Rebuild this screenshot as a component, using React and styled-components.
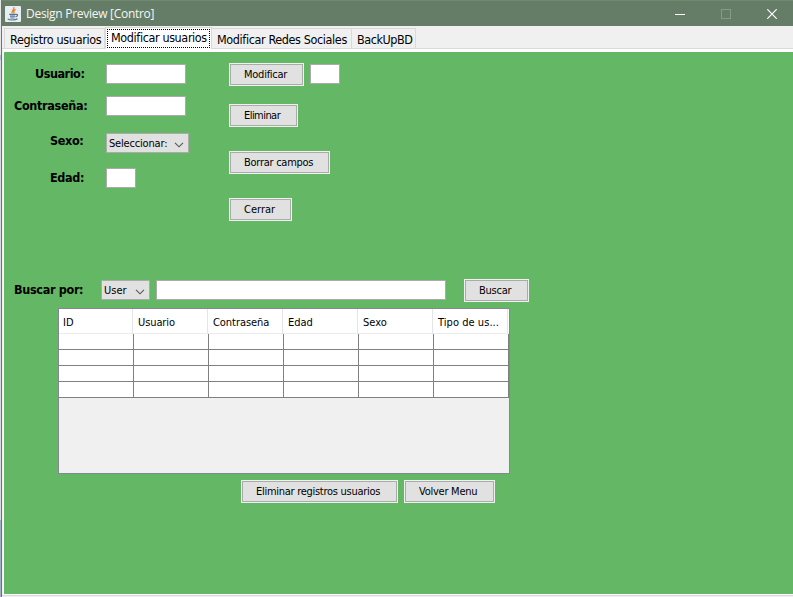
import React from 'react';
import styled, { createGlobalStyle } from 'styled-components';

const Global = createGlobalStyle`
  * { box-sizing: border-box; }
  body { margin: 0; background: #64b865; overflow: hidden; }
`;

const Desktop = styled.div`
  display: flex;
  width: 793px;
  height: 597px;
  background: #f0f0f0;
  color: #000;
  font: 11px/14px "DejaVu Sans Condensed", "DejaVu Sans", sans-serif;
`;

const Edge = styled.div`
  flex: none;
  width: 2px;
  border-right: 1px solid #657d66;
  background: linear-gradient(#e4e6e8 0 55px, #b4bfcc 55px 60px, #d5dbe0 60px 520px, #9fb0c0 520px);
`;

const Window = styled.div`
  display: flex;
  flex-direction: column;
  width: 791px;
`;

const TitleBar = styled.header`
  display: flex;
  align-items: center;
  height: 26px;
  padding-left: 3px;
  border-top: 1px solid #6f8870;
  background: #657d66;
  color: #f4f6f4;
`;

const Title = styled.div`
  flex: 1;
  margin-left: 5px;
  font: 12px/16px "Open Sans", "Noto Sans", sans-serif;
  letter-spacing: ${(p) => p.$track}px;
  white-space: nowrap;
`;

const WindowControls = styled.div`
  display: flex;
  margin-right: -2px;
`;

const WindowControl = styled.div`
  display: flex;
  justify-content: center;
  width: 46px;
  opacity: ${(p) => (p.$dim ? 0.22 : 1)};
  svg { display: block; }
`;

const TabBar = styled.nav`
  display: flex;
  align-items: flex-end;
  height: 23px;
  padding-left: 2px;
  border-bottom: 1px solid #d9d9d9;
`;

const Tab = styled.div`
  flex: none;
  width: ${(p) => p.$w}px;
  height: 20px;
  padding: 3px 0 0 5px;
  border: 1px solid #d9d9d9;
  border-bottom: 0;
  border-left-width: ${(p) => (p.$first ? 1 : 0)}px;
  background: #f0f0f0;
  font-size: 12.5px;
  line-height: 16px;
  letter-spacing: ${(p) => p.$track}px;
  white-space: nowrap;
`;

const ActiveTab = styled(Tab)`
  height: 22px;
  margin-bottom: -1px;
  padding: 1px;
  border-left-width: 1px;
  background: #fff;
`;

const Focus = styled.div`
  height: 19px;
  padding: 0 0 0 3px;
  border: 1px dotted #000;
`;

const Pane = styled.main`
  flex: 1;
  display: flex;
  flex-direction: column;
  margin-left: 1px;
  border: solid #fff;
  border-width: 3px 0 1px 1px;
  background: #64b865;
`;

const Form = styled.section`
  display: flex;
  height: 226px;
  padding-top: 12px;
`;

const Labels = styled.div`
  width: 102px;
  padding-top: 1px;
`;

const Label = styled.div`
  height: 18px;
  margin-top: ${(p) => p.$gap || 0}px;
  margin-left: ${(p) => p.$x}px;
  font-size: 12.5px;
  font-weight: bold;
  line-height: 18px;
  letter-spacing: ${(p) => p.$track || 0}px;
  white-space: nowrap;
`;

const Fields = styled.div`
  width: 123px;
`;

const Input = styled.div`
  width: ${(p) => p.$w}px;
  height: 20px;
  margin-top: ${(p) => p.$gap || 0}px;
  border: 1px solid #ababab;
  background: #fff;
`;

const Select = styled.div`
  display: flex;
  align-items: center;
  justify-content: space-between;
  width: ${(p) => p.$w}px;
  height: 20px;
  margin-top: ${(p) => p.$gap || 0}px;
  padding: 1px 4px 0 2px;
  border: 1px solid #ababab;
  background: #e1e1e1;
  letter-spacing: ${(p) => p.$track || 0}px;
  white-space: nowrap;
  svg { margin-top: 2px; }
`;

const Actions = styled.div`
  display: flex;
  flex-direction: column;
  align-items: flex-start;
  margin-top: -1px;
`;

const Row = styled.div`
  display: flex;
  align-items: flex-start;
  gap: 6px;
`;

const Button = styled.div`
  width: ${(p) => p.$w}px;
  height: 23px;
  margin-top: ${(p) => p.$gap || 0}px;
  padding-left: 14px;
  border: 1px solid #f0f0f0;
  outline: 1px solid #ababab;
  outline-offset: -2px;
  background: #e1e1e1;
  line-height: 21px;
  letter-spacing: ${(p) => p.$track || 0}px;
  white-space: nowrap;
`;

const Search = styled.section`
  display: flex;
  align-items: flex-start;
  height: 30px;
`;

const SearchLabel = styled(Label)`
  width: 87px;
  margin-left: 10px;
  margin-top: 3px;
`;

const SearchInput = styled(Input)`
  margin: 2px 18px 0 6px;
`;

const TableFrame = styled.section`
  width: 452px;
  height: 166px;
  margin-left: 54px;
  border: 1px solid #828790;
  background: #f0f0f0;
`;

const HeaderRow = styled.div`
  display: grid;
  grid-template-columns: repeat(6, 75px);
  height: 25px;
  border-bottom: 1px solid #ececec;
  background: #fff;
`;

const HeaderCell = styled.div`
  margin-right: 1px;
  padding: 7px 0 0 4px;
  border-right: 1px solid #e5e5e5;
  letter-spacing: ${(p) => p.$track || 0}px;
  white-space: nowrap;
`;

const BodyRow = styled.div`
  display: grid;
  grid-template-columns: repeat(6, 75px);
  height: 16px;
  background: #fff;
`;

const Cell = styled.div`
  border: solid #808080;
  border-width: 0 1px 1px 0;
`;

const Footer = styled.footer`
  display: flex;
  gap: 6px;
  margin: 6px 0 0 237px;
`;

const BottomEdge = styled.div`
  height: 2px;
  border-top: 1px solid #d9d9d9;
`;

const Chevron = () => (
  <svg width="10" height="6" viewBox="0 0 10 6" fill="none" stroke="#555" strokeWidth="1.1">
    <path d="M1 .8 5 4.8 9 .8" />
  </svg>
);

const JavaIcon = () => (
  <svg width="16" height="16" viewBox="0 0 16 16" fill="none">
    <rect width="16" height="16" rx="1" fill="#e9eef2" />
    <path d="M8.7 1.2C10 3.2 6 4.4 7.3 7.2M10.6 3.4C8 4.5 8.6 5.6 9 7.4" stroke="#e8842c" strokeWidth="1.3" />
    <path d="M4.2 8.4h6.4M5 10.2h5M10.6 8.4c3-.5 2 2-.2 2.6M5.3 12h4.2M2.7 12.9c1.6 1.5 8 1.4 9.8-.1" stroke="#4f7391" strokeWidth="1.2" />
  </svg>
);

const columns = [
  ['ID', 0], ['Usuario', -0.1], ['Contraseña', -0.05], ['Edad', 0], ['Sexo', 0], ['Tipo de us...', 0.05],
];

export default function App() {
  return (
    <Desktop>
      <Global />
      <Edge />
      <Window>
        <TitleBar>
          <JavaIcon />
          <Title $track={-0.28}>Design Preview [Contro]</Title>
          <WindowControls>
            <WindowControl>
              <svg width="10" height="10"><path d="M0 5.5h10" stroke="#fff" /></svg>
            </WindowControl>
            <WindowControl $dim>
              <svg width="10" height="10"><rect x=".5" y=".5" width="9" height="9" fill="none" stroke="#fff" /></svg>
            </WindowControl>
            <WindowControl>
              <svg width="10" height="10"><path d="M.3.3l9.4 9.4M9.7.3.3 9.7" stroke="#fff" strokeWidth="1.2" /></svg>
            </WindowControl>
          </WindowControls>
        </TitleBar>
        <TabBar>
          <Tab $first $w={101} $track={-0.33}>Registro usuarios</Tab>
          <ActiveTab $w={107} $track={-0.38}><Focus>Modificar usuarios</Focus></ActiveTab>
          <Tab $w={140} $track={-0.38}>Modificar Redes Sociales</Tab>
          <Tab $w={64} $track={-0.45}>BackUpBD</Tab>
        </TabBar>
        <Pane>
          <Form>
            <Labels>
              <Label $x={31} $track={-0.45}>Usuario:</Label>
              <Label $x={10} $gap={14} $track={-0.32}>Contraseña:</Label>
              <Label $x={46} $gap={17} $track={-0.35}>Sexo:</Label>
              <Label $x={46} $gap={19} $track={-0.35}>Edad:</Label>
            </Labels>
            <Fields>
              <Input $w={80} />
              <Input $w={80} $gap={12} />
              <Select $w={83} $gap={17} $track={-0.18}>Seleccionar:<Chevron /></Select>
              <Input $w={30} $gap={15} />
            </Fields>
            <Actions>
              <Row>
                <Button $w={75} $track={-0.25}>Modificar</Button>
                <Input $w={30} $gap={1} />
              </Row>
              <Button $w={69} $gap={18} $track={-0.55}>Eliminar</Button>
              <Button $w={101} $gap={24} $track={-0.27}>Borrar campos</Button>
              <Button $w={63} $gap={24}>Cerrar</Button>
            </Actions>
          </Form>
          <Search>
            <SearchLabel $x={10} $track={-0.32}>Buscar por:</SearchLabel>
            <Select $w={49} $gap={2}>User<Chevron /></Select>
            <SearchInput $w={290} />
            <Button $w={65} $gap={1} $track={-0.25}>Buscar</Button>
          </Search>
          <TableFrame>
            <HeaderRow>
              {columns.map(([name, track]) => <HeaderCell key={name} $track={track}>{name}</HeaderCell>)}
            </HeaderRow>
            {[0, 1, 2, 3].map((r) => (
              <BodyRow key={r}>{columns.map(([name]) => <Cell key={name} />)}</BodyRow>
            ))}
          </TableFrame>
          <Footer>
            <Button $w={157} $track={-0.28}>Eliminar registros usuarios</Button>
            <Button $w={91} $track={-0.25}>Volver Menu</Button>
          </Footer>
        </Pane>
        <BottomEdge />
      </Window>
    </Desktop>
  );
}
